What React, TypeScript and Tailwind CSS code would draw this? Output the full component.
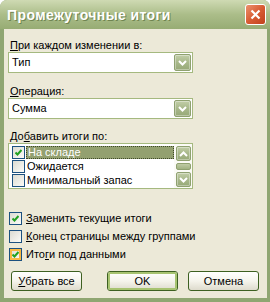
import React from "react";

const font = { fontFamily: '"Liberation Sans", Arial, sans-serif' };

function Chevron({ up = false }: { up?: boolean }): JSX.Element {
  return (
    <svg width="9" height="6" viewBox="0 0 9 6">
      <polyline
        points={up ? "1,5 4.5,1.5 8,5" : "1,1 4.5,4.5 8,1"}
        fill="none"
        stroke="#ffffff"
        strokeWidth="2"
      />
    </svg>
  );
}

function ArrowButton({ up = false, className = "" }: { up?: boolean; className?: string }): JSX.Element {
  return (
    <div
      className={`flex items-center justify-center rounded-[2px] border border-[#8fa170] bg-gradient-to-b from-[#c2cea8] via-[#a8b88a] to-[#97a978] shadow-[inset_0_0_0_1px_rgba(255,255,255,0.35)] ${className}`}
    >
      <Chevron up={up} />
    </div>
  );
}

function Combo({ value }: { value: string }): JSX.Element {
  return (
    <div className="flex h-[21px] w-[185px] items-center border border-[#a5b97f] bg-white pl-[3px] pr-[1px]">
      <span className="flex-1 text-[11px] leading-[13px] text-black">{value}</span>
      <ArrowButton className="h-[17px] w-[17px]" />
    </div>
  );
}

function Check({ checked, hot = false }: { checked: boolean; hot?: boolean }): JSX.Element {
  return (
    <div className="flex h-[13px] w-[13px] shrink-0 items-center justify-center border border-[#1c5180] bg-gradient-to-br from-[#dcdbd2] to-[#fbfbf8]">
      <div
        className={`flex h-[11px] w-[11px] items-center justify-center ${
          hot ? "shadow-[inset_0_0_0_2px_#f9b943]" : ""
        }`}
      >
        {checked && (
          <svg width="7" height="7" viewBox="0 0 7 7">
            <polyline points="0.5,3.5 2.5,5.5 6.5,1" fill="none" stroke="#21a121" strokeWidth="2" />
          </svg>
        )}
      </div>
    </div>
  );
}

function Label({ children }: { children: React.ReactNode }): JSX.Element {
  return <div className="pl-[2px] text-[11px] leading-[13px] text-black">{children}</div>;
}

function Button({
  children,
  primary = false,
}: {
  children: React.ReactNode;
  primary?: boolean;
}): JSX.Element {
  return (
    <div className="h-[20px] w-[71px] rounded-[3px] border border-[#3d6021] bg-gradient-to-b from-[#ffffff] via-[#f5f4ec] to-[#dedbcd]">
      <div
        className={`flex h-full w-full items-center justify-center rounded-[2px] text-[11px] leading-[13px] text-black ${
          primary ? "shadow-[inset_0_0_0_2px_#a7c371]" : ""
        }`}
      >
        {children}
      </div>
    </div>
  );
}

export default function App(): JSX.Element {
  return (
    <div
      className="flex h-[302px] w-[270px] flex-col overflow-hidden rounded-t-[7px] bg-[#8fa672]"
      style={font}
    >
      {/* title bar */}
      <div className="flex h-[29px] shrink-0 items-center bg-gradient-to-b from-[#cfdab3] via-[#abbd89] to-[#97ac74] pl-[7px] pr-[4px]">
        <span className="flex-1 text-[14px] font-bold leading-[16px] tracking-[0.4px] text-white [text-shadow:1px_1px_0_#6f8450]">
          Промежуточные итоги
        </span>
        <div className="flex h-[21px] w-[21px] items-center justify-center rounded-[3px] border border-white bg-gradient-to-br from-[#eb916d] via-[#d85c33] to-[#c1401c]">
          <svg width="11" height="11" viewBox="0 0 11 11">
            <path d="M1.5 1.5 L9.5 9.5 M9.5 1.5 L1.5 9.5" stroke="#ffffff" strokeWidth="2.2" />
          </svg>
        </div>
      </div>

      {/* client area */}
      <div className="mb-[4px] ml-[4px] mr-[3px] flex flex-1 flex-col bg-[#ece9d8] px-[4px] pt-[10px]">
        <Label>
          <u>П</u>ри каждом изменении в:
        </Label>
        <Combo value="Тип" />

        <div className="mt-[12px]">
          <Label>
            <u>О</u>перация:
          </Label>
        </div>
        <Combo value="Сумма" />

        <div className="mt-[11px]">
          <Label>
            До<u>б</u>авить итоги по:
          </Label>
        </div>
        <div className="flex h-[46px] w-[185px] border border-[#a5b97f] bg-white">
          <div className="flex flex-1 flex-col pl-[3px] pt-[1px]">
            {[
              { text: "На складе", checked: true, selected: true },
              { text: "Ожидается", checked: false, selected: false },
              { text: "Минимальный запас", checked: false, selected: false },
            ].map((item) => (
              <div key={item.text} className="flex h-[14px] items-center">
                <Check checked={item.checked} />
                <div
                  className={`ml-[1px] flex h-[13px] flex-1 items-center pl-[1px] text-[11px] leading-[13px] ${
                    item.selected
                      ? "border border-dotted border-[#3f4a2a] bg-[#93a070] text-white"
                      : "text-black"
                  }`}
                >
                  {item.text}
                </div>
              </div>
            ))}
          </div>
          <div className="flex w-[18px] flex-col items-center bg-[#fbfbf6] px-[1px] pt-[2px]">
            <ArrowButton up className="h-[15px] w-[15px]" />
            <div className="mt-[2px] h-[7px] w-[15px] rounded-[2px] border border-[#8fa170] bg-gradient-to-b from-[#bfcba5] to-[#a1b282]" />
            <ArrowButton className="mt-[2px] h-[15px] w-[15px]" />
          </div>
        </div>

        <div className="mt-[23px] flex flex-col gap-[5px] pl-[1px]">
          <div className="flex items-center gap-[4px]">
            <Check checked />
            <span className="text-[11px] leading-[13px] text-black">
              <u>З</u>аменить текущие итоги
            </span>
          </div>
          <div className="flex items-center gap-[4px]">
            <Check checked={false} />
            <span className="text-[11px] leading-[13px] text-black">
              <u>К</u>онец страницы между группами
            </span>
          </div>
          <div className="flex items-center gap-[4px]">
            <Check checked hot />
            <span className="text-[11px] leading-[13px] text-black">
              Ито<u>г</u>и под данными
            </span>
          </div>
        </div>

        <div className="mt-[10px] flex pl-[3px]">
          <Button>
            <u>У</u>брать все
          </Button>
          <div className="ml-[25px]">
            <Button primary>OK</Button>
          </div>
          <div className="ml-[10px]">
            <Button>Отмена</Button>
          </div>
        </div>
      </div>
    </div>
  );
}
